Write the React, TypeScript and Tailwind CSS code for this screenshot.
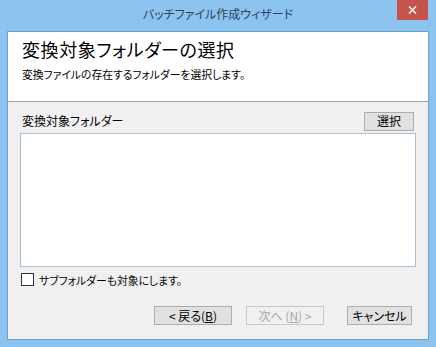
import React from "react";

const font = "[font-family:'Noto_Sans_CJK_JP','Noto_Sans_CJK_SC',sans-serif] [font-feature-settings:'palt']";

export default function App() {
  return (
    <div className={`w-[436px] h-[347px] bg-[#8dc3ef] flex flex-col ${font} text-black`}>
      <div className="h-[31px] flex items-start relative">
        <div className="flex-1 text-center text-[12px] text-[#2a4360] pt-[6px] leading-[16px]">バッチファイル作成ウィザード</div>
        <div className="absolute right-[8px] top-0 w-[31px] h-[20px] bg-[#c7514b] flex items-center justify-center">
          <svg width="9" height="8" viewBox="0 0 9 8">
            <path d="M1 0.5 L8 7.5 M8 0.5 L1 7.5" stroke="white" strokeWidth="1.6" />
          </svg>
        </div>
      </div>
      <div className="mx-[7px] mb-[7px] flex-1 border border-[#6b9fce] bg-[#f0f0f0] flex flex-col">
        <div className="h-[70px] bg-white border-b border-[#a0a0a0] pl-[14px] pt-[5px]">
          <div className="text-[18px] leading-[25px] tracking-[0.6px]">変換対象フォルダーの選択</div>
          <div className="text-[10.8px] leading-[16px] mt-[4px]">変換ファイルの存在するフォルダーを選択します。</div>
        </div>
        <div className="px-[12px] pt-[10px] flex flex-col">
          <div className="flex items-center justify-between h-[18px]">
            <div className="text-[12px] leading-[16px] pl-[2px]">変換対象フォルダー</div>
            <div className="w-[50px] h-[19px] bg-[#e1e1e1] border border-[#adadad] text-[12px] leading-[16px] flex items-center justify-center mr-[2px]">選択</div>
          </div>
          <div className="mt-[3px] h-[134px] bg-white border border-[#a6c0da]" />
          <div className="flex items-center mt-[6px] h-[13px]">
            <div className="w-[13px] h-[13px] border border-[#333] bg-white ml-[1px]" />
            <div className="text-[10.8px] leading-[16px] ml-[5px]">サブフォルダーも対象にします。</div>
          </div>
          <div className="flex justify-end mt-[20px] pr-[4px]">
            <div className="w-[78px] h-[19px] bg-[#e1e1e1] border border-[#adadad] text-[12px] leading-[16px] flex items-center justify-center">&lt; 戻る(<span className="underline">B</span>)</div>
            <div className="w-[78px] h-[19px] ml-[14px] bg-[#f0f0f0] border border-[#c7c7c7] text-[#a6a6a6] text-[12px] leading-[16px] flex items-center justify-center">次へ (<span className="underline">N</span>) &gt;</div>
            <div className="w-[65px] h-[19px] ml-[23px] bg-[#e1e1e1] border border-[#adadad] text-[12px] leading-[16px] flex items-center justify-center">キャンセル</div>
          </div>
        </div>
      </div>
    </div>
  );
}
